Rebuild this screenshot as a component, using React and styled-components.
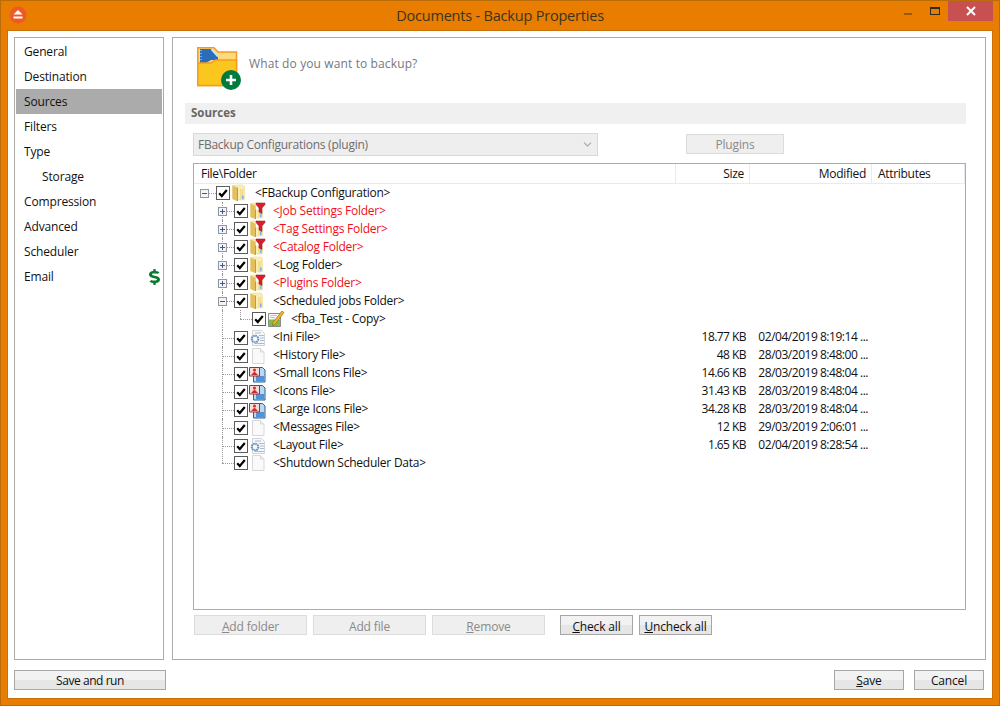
import React from "react";
import styled, { createGlobalStyle } from "styled-components";
import { FaDollarSign } from "react-icons/fa";
import { ChevronDown } from "lucide-react";

const Global = createGlobalStyle`
   html, body {
      margin: 0;
      padding: 0;
      background: #e87d00;
   }
   * {
      box-sizing: border-box;
   }
   body {
      font-family: "Open Sans", "Noto Sans", "Liberation Sans", sans-serif;
      font-size: 12px;
      color: #111;
   }
`;
const Frame = styled.div`
   width: 1000px;
   height: 706px;
   background: #e87d00;
   border: 1px solid #bb6c0a;
   display: flex;
   flex-direction: column;
   overflow: hidden;
`;
const TitleBar = styled.div`
   height: 29px;
   flex: none;
   display: grid;
   grid-template-columns: 1fr auto 1fr;
   align-items: start;
`;
const AppIcon = styled.svg`
   width: 18px;
   height: 18px;
   margin: 5px 0 0 8px;
   display: block;
`;
const Title = styled.div`
   font-size: 14.5px;
   line-height: 29px;
   color: #3b3424;
   letter-spacing: -0.2px;
`;
const Controls = styled.div`
   display: flex;
   justify-content: flex-end;
   margin-right: 6px;
`;
const MinBtn = styled.div`
   width: 8px;
   height: 2px;
   margin: 12px 18px 0 0;
   background: #9a5a0c;
`;
const MaxBtn = styled.div`
   width: 10px;
   height: 8px;
   margin: 6px 8px 0 0;
   border: 1px solid #2f2a22;
   border-top-width: 2px;
`;
const CloseBtn = styled.div`
   width: 45px;
   height: 20px;
   background: #c75050;
   display: flex;
   align-items: center;
   justify-content: center;
`;
const Client = styled.div`
   flex: 1;
   min-height: 0;
   margin: 0 6px 6px;
   background: #fff;
   border: 1px solid #c8700a;
   padding: 6px 6px 8px;
   display: flex;
   flex-direction: column;
`;
const Panels = styled.div`
   flex: 1;
   min-height: 0;
   display: grid;
   grid-template-columns: 150px 814px;
   gap: 8px;
`;
const Nav = styled.div`
   border: 1px solid #ababab;
   padding: 1px;
`;
const NavItem = styled.div`
   height: 25px;
   display: flex;
   align-items: center;
   justify-content: space-between;
   padding: 0 2px 0 ${(p) => (p.$sub ? 26 : 8)}px;
   background: ${(p) => (p.$active ? "#ababab" : "transparent")};
   letter-spacing: -0.15px;
   svg {
      color: #0a7a2c;
      width: 11px;
      height: 16px;
   }
`;
const Main = styled.div`
   border: 1px solid #ababab;
   padding: 0 19px 0 12px;
   display: flex;
   flex-direction: column;
`;
const Intro = styled.div`
   height: 65px;
   flex: none;
   display: flex;
   align-items: flex-start;
   padding: 8px 0 0 12px;
   svg {
      flex: none;
      display: block;
   }
`;
const IntroText = styled.div`
   margin: 9px 0 0 7px;
   color: #777780;
   letter-spacing: 0.12px;
`;
const SectionBar = styled.div`
   height: 21px;
   flex: none;
   background: #f0f0f0;
   padding-left: 6px;
   line-height: 20px;
   font-weight: 700;
   font-size: 11.5px;
   color: #666;
`;
const SourceRow = styled.div`
   flex: none;
   display: flex;
   align-items: flex-start;
   margin: 9px 0 7px 8px;
`;
const SourceSelect = styled.div`
   width: 405px;
   height: 23px;
   background: #eeeeee;
   border: 1px solid #d9d9d9;
   display: flex;
   align-items: center;
   justify-content: space-between;
   padding: 0 3px 0 4px;
   color: #6d6d6d;
   letter-spacing: -0.25px;
   svg {
      color: #a8a8a8;
   }
`;
const Button = styled.div`
   height: 20px;
   width: ${(p) => p.$w}px;
   display: flex;
   flex: none;
   align-items: center;
   justify-content: center;
   letter-spacing: ${(p) => (p.$tight ? "-0.45px" : "-0.15px")};
   border: 1px solid ${(p) => (p.$off ? "#dcdcdc" : "#a6a6a6")};
   color: ${(p) => (p.$off ? "#8a8a8a" : "#111")};
   background: ${(p) =>
      p.$off ? "#efefef" : "linear-gradient(#f2f2f2 0 50%, #e6e6e6 50% 100%)"};
`;
const PluginsButton = styled(Button)`
   margin: 1px 0 0 88px;
`;
const TreeBox = styled.div`
   height: 447px;
   flex: none;
   margin-left: 8px;
   border: 1px solid #ababab;
   padding-right: 1px;
`;
const Cols = "482px 74px 122px 93px";
const TreeHead = styled.div`
   height: 20px;
   display: grid;
   grid-template-columns: ${Cols};
   border-bottom: 1px solid #e3ebf5;
`;
const HeadCell = styled.div`
   line-height: 20px;
   padding: 0 5px 0 6px;
   border-right: 1px solid #e3ebf5;
   text-align: ${(p) => (p.$right ? "right" : "left")};
   letter-spacing: -0.3px;
   &:first-child {
      padding-left: 7px;
   }
`;
const Row = styled.div`
   height: 18px;
   display: grid;
   grid-template-columns: ${Cols};
   align-items: center;
`;
const NameCell = styled.div`
   height: 18px;
   display: flex;
   align-items: center;
   padding-left: 1px;
`;
const Indent = styled.div`
   width: 18px;
   height: 18px;
   flex: none;
`;
const Guide = styled.div`
   width: 18px;
   height: 18px;
   flex: none;
   position: relative;
   &::before {
      content: "";
      display: ${(p) => (p.$v ? "block" : "none")};
      position: absolute;
      left: 9px;
      top: 0;
      height: ${(p) => (p.$half ? "9px" : "18px")};
      border-left: 1px dotted #9a9a9a;
   }
   &::after {
      content: "";
      display: ${(p) => (p.$h ? "block" : "none")};
      position: absolute;
      left: 9px;
      right: -3px;
      top: 9px;
      border-top: 1px dotted #9a9a9a;
   }
`;
const Twisty = styled.svg`
   width: 9px;
   height: 9px;
   position: absolute;
   left: 5px;
   top: 5px;
   z-index: 1;
   display: block;
`;
const Check = styled.svg`
   width: 14px;
   height: 14px;
   flex: none;
   margin-left: 3px;
   position: relative;
   z-index: 1;
   display: block;
`;
const IconSlot = styled.div`
   width: 18px;
   height: 18px;
   flex: none;
   margin-left: 2px;
   svg {
      display: block;
      overflow: visible;
   }
`;
const Label = styled.span`
   margin: 0 0 2px 5px;
   white-space: nowrap;
   letter-spacing: -0.24px;
   color: ${(p) => (p.$red ? "#f01020" : "#111")};
`;
const Size = styled.div`
   text-align: right;
   padding: 0 4px 2px 0;
   letter-spacing: -0.55px;
`;
const Modified = styled.div`
   text-align: right;
   padding: 0 4px 2px 0;
   white-space: nowrap;
   overflow: hidden;
   letter-spacing: -0.47px;
`;
const TreeButtons = styled.div`
   flex: none;
   display: flex;
   gap: 6px;
   margin: 5px 0 0 9px;
   & > div {
      padding-top: 2px;
   }
`;
const ButtonGap = styled.div`
   width: 3px;
   flex: none;
`;
const Footer = styled.div`
   flex: none;
   height: 20px;
   margin-top: 10px;
   padding-right: 2px;
   display: flex;
   gap: 10px;
`;
const Push = styled.div`
   flex: 1;
`;

const FolderArt = ({ filter }) => (
   <svg width="18" height="18" viewBox="0 0 18 18">
      <path d="M0.500 1.500L5 1h6l1.500 1.500V16H4L0.500 15z" fill="#fbeeb4" stroke="#e9d48c" strokeWidth="0.500" />
      <path d="M0.500 1.500l4.500 2V17l-4.500-2z" fill="#e6bf5c" />
      <path d="M5 3.500h1V17H5z" fill="#c79a38" />
      <path d="M8 5h3.500v11H8z" fill="#f5dd92" />
      <path d="M10 11.500h1.500v3.500H10z" fill="#79b2e2" />
      {filter && (
         <>
            <path d="M5.500 0.500h10v7h-10z" fill="#fff" />
            <path d="M6 1h9v1.500L12 6v5.500l-3-1.500V6L6 2.500z" fill="#d8202c" stroke="#8a1a20" strokeWidth="0.500" />
         </>
      )}
   </svg>
);
const BlankArt = () => (
   <svg width="18" height="18" viewBox="0 0 18 18">
      <path d="M2.500 1.500h8l3.500 3.500v11.500h-11.500z" fill="#fafafa" stroke="#d8d8d8" />
      <path d="M10.500 1.500v3.500h3.500" fill="#eeeeee" stroke="#d8d8d8" />
   </svg>
);
const GearArt = () => (
   <svg width="18" height="18" viewBox="0 0 18 18">
      <path d="M2.500 1.500h9l3 3v12h-12z" fill="#f8f8f8" stroke="#cfd4da" />
      <path d="M5 4h6M9 6.500h5M10 9h4M10 11.500h4M5 14.500h9" stroke="#a7bdd3" />
      <circle cx="5" cy="10" r="3.300" fill="none" stroke="#5d8fc6" strokeWidth="2" strokeDasharray="1.600 .6" />
      <circle cx="5" cy="10" r="1" fill="#fff" />
   </svg>
);
const ImageArt = () => (
   <svg width="18" height="18" viewBox="0 0 18 18">
      <path d="M3.500 2.500h9l2.500 2.500v12h-11.500z" fill="#bcd8f0" stroke="#2c5f96" />
      <path d="M6 11h8v5.500H6z" fill="#4e93d8" />
      <path d="M-0.500 2.500h10v8.500h-10z" fill="#f6dcd8" stroke="#b02a2a" />
      <circle cx="4.500" cy="5" r="1.500" fill="#c83030" />
      <path d="M1 10l3.500-3.500L8 10z" fill="#c83030" />
   </svg>
);
const NoteArt = () => (
   <svg width="18" height="18" viewBox="0 0 18 18">
      <path d="M0.500 3.500h12v13h-12z" fill="#fafafa" stroke="#8a8a8a" />
      <path d="M1 9.500h11V16H1z" fill="#7cc04a" />
      <path d="M2 5.500h7M2 7.500h5" stroke="#c4c4c4" />
      <path d="M5 12.500L14 1l2 1.500L7 14.500l-2.500 1z" fill="#f0b828" stroke="#8a5a10" strokeWidth="0.600" />
   </svg>
);
const arts = {
   folder: <FolderArt />,
   filter: <FolderArt filter />,
   blank: <BlankArt />,
   gear: <GearArt />,
   image: <ImageArt />,
   note: <NoteArt />,
};

const Box = ({ open }) => (
   <Twisty viewBox="0 0 9 9">
      <rect x="0.500" y="0.500" width="8" height="8" fill="#f4f4f4" stroke="#8c96a6" />
      <path d="M2 4.500h5" stroke="#3f5a8c" />
      {!open && <path d="M4.500 2v5" stroke="#3f5a8c" />}
   </Twisty>
);
const Tick = () => (
   <Check viewBox="0 0 14 14">
      <rect x="0.500" y="0.500" width="13" height="13" fill="#fff" stroke="#5c5c5c" />
      <path d="M3.200 7.200l2.600 2.800 5-6" fill="none" stroke="#000" strokeWidth="2.200" />
   </Check>
);

const nodes = [
   { level: 0, box: "open", art: "folder", name: "<FBackup Configuration>" },
   { level: 1, box: "closed", art: "filter", name: "<Job Settings Folder>", red: true },
   { level: 1, box: "closed", art: "filter", name: "<Tag Settings Folder>", red: true },
   { level: 1, box: "closed", art: "filter", name: "<Catalog Folder>", red: true },
   { level: 1, box: "closed", art: "folder", name: "<Log Folder>" },
   { level: 1, box: "closed", art: "filter", name: "<Plugins Folder>", red: true },
   { level: 1, box: "open", art: "folder", name: "<Scheduled jobs Folder>" },
   { level: 2, art: "note", name: "<fba_Test - Copy>" },
   { level: 1, art: "gear", name: "<Ini File>", size: "18.77 KB", date: "02/04/2019 8:19:14 ..." },
   { level: 1, art: "blank", name: "<History File>", size: "48 KB", date: "28/03/2019 8:48:00 ..." },
   { level: 1, art: "image", name: "<Small Icons File>", size: "14.66 KB", date: "28/03/2019 8:48:04 ..." },
   { level: 1, art: "image", name: "<Icons File>", size: "31.43 KB", date: "28/03/2019 8:48:04 ..." },
   { level: 1, art: "image", name: "<Large Icons File>", size: "34.28 KB", date: "28/03/2019 8:48:04 ..." },
   { level: 1, art: "blank", name: "<Messages File>", size: "12 KB", date: "29/03/2019 2:06:01 ..." },
   { level: 1, art: "gear", name: "<Layout File>", size: "1.65 KB", date: "02/04/2019 8:28:54 ..." },
   { level: 1, art: "blank", name: "<Shutdown Scheduler Data>", last: true },
];

const navItems = ["General", "Destination", "Sources", "Filters", "Type", "Storage", "Compression", "Advanced", "Scheduler", "Email"];

const App = () => {
   return (
      <Frame>
         <Global />
         <TitleBar>
            <AppIcon viewBox="0 0 18 18">
               <circle cx="9" cy="9" r="8.500" fill="#ee5a24" />
               <path d="M9 4l4.500 4.500h-9z" fill="#fff" />
               <path d="M4.500 10.500h9v2h-9z" fill="#fff" />
            </AppIcon>
            <Title>Documents - Backup Properties</Title>
            <Controls>
               <MinBtn />
               <MaxBtn />
               <CloseBtn>
                  <svg width="10" height="10" viewBox="0 0 10 10">
                     <path d="M1 1l8 8M9 1l-8 8" stroke="#fff" strokeWidth="2" />
                  </svg>
               </CloseBtn>
            </Controls>
         </TitleBar>
         <Client>
            <Panels>
               <Nav>
                  {navItems.map((item) => (
                     <NavItem key={item} $active={item === "Sources"} $sub={item === "Storage"}>
                        {item}
                        {item === "Email" && <FaDollarSign preserveAspectRatio="none" />}
                     </NavItem>
                  ))}
               </Nav>
               <Main>
                  <Intro>
                     <svg width="45" height="45" viewBox="0 0 45 45">
                        <path d="M0.750 1.750H17L21 6H39.500V39.500H0.750z" fill="#fbd97c" stroke="#f59a1c" strokeWidth="1.500" />
                        <path d="M3 3H15L21 10V14H14L9 17H3z" fill="#2a6ebb" />
                        <path d="M14.500 3L21 10.500" stroke="#cfe2f4" strokeWidth="2" />
                        <path d="M4 4V16" stroke="#cfe2f4" strokeDasharray="1 2" />
                        <path d="M0.750 17H14L18.500 14H39.500V39.500H0.750z" fill="#fbc61e" stroke="#f59a1c" strokeWidth="1.500" />
                        <circle cx="34" cy="34" r="10" fill="#007a3d" />
                        <path d="M34 29v10M29 34h10" stroke="#fff" strokeWidth="2.600" />
                     </svg>
                     <IntroText>What do you want to backup?</IntroText>
                  </Intro>
                  <SectionBar>Sources</SectionBar>
                  <SourceRow>
                     <SourceSelect>
                        FBackup Configurations (plugin)
                        <ChevronDown size={13} />
                     </SourceSelect>
                     <PluginsButton $w={98} $off>Plugins</PluginsButton>
                  </SourceRow>
                  <TreeBox>
                     <TreeHead>
                        <HeadCell>File\Folder</HeadCell>
                        <HeadCell $right>Size</HeadCell>
                        <HeadCell $right>Modified</HeadCell>
                        <HeadCell>Attributes</HeadCell>
                     </TreeHead>
                     {nodes.map((n) => (
                        <Row key={n.name}>
                           <NameCell>
                              {n.level > 0 && <Indent />}
                              {n.level === 2 && <Guide $v />}
                              <Guide $v={n.level > 0} $half={n.last || n.level === 2} $h>
                                 {n.box && <Box open={n.box === "open"} />}
                              </Guide>
                              <Tick />
                              <IconSlot>{arts[n.art]}</IconSlot>
                              <Label $red={n.red}>{n.name}</Label>
                           </NameCell>
                           <Size>{n.size}</Size>
                           <Modified>{n.date}</Modified>
                           <div />
                        </Row>
                     ))}
                  </TreeBox>
                  <TreeButtons>
                     <Button $w={113} $off><span><u>A</u>dd folder</span></Button>
                     <Button $w={113} $off><span>Add file</span></Button>
                     <Button $w={113} $off><span><u>R</u>emove</span></Button>
                     <ButtonGap />
                     <Button $w={73}><span><u>C</u>heck all</span></Button>
                     <Button $w={73}><span><u>U</u>ncheck all</span></Button>
                  </TreeButtons>
               </Main>
            </Panels>
            <Footer>
               <Button $w={152} $tight>Save and run</Button>
               <Push />
               <Button $w={70}><span><u>S</u>ave</span></Button>
               <Button $w={70}>Cancel</Button>
            </Footer>
         </Client>
      </Frame>
   );
};

export default App;
